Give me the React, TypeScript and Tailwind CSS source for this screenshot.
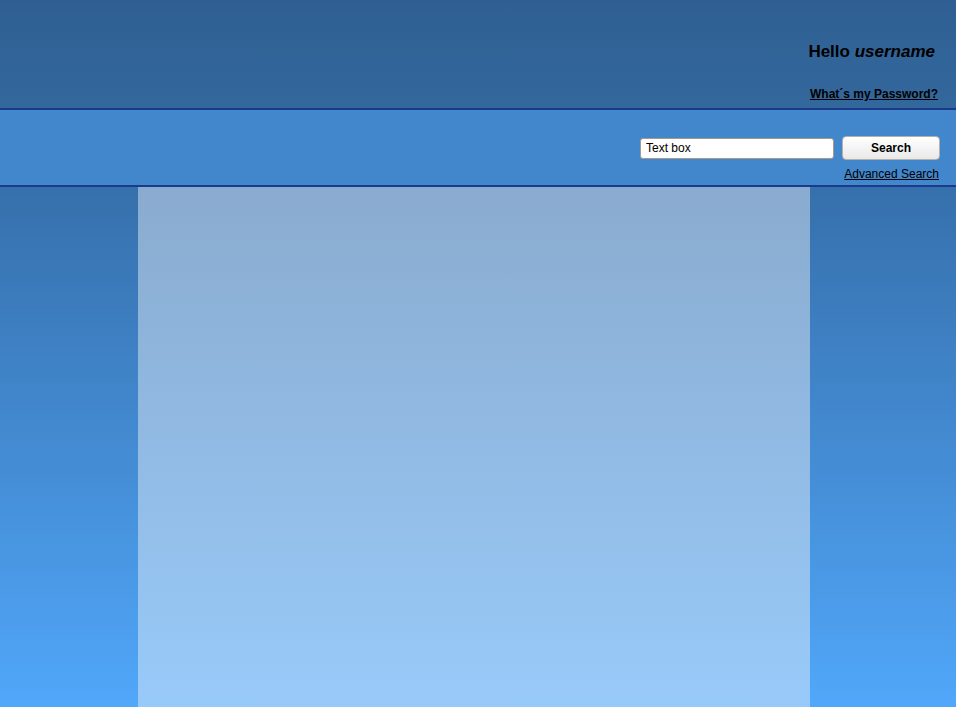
export default function App() {
  return (
    <div className="flex min-h-[707px] flex-col font-['Liberation_Sans',Arial,sans-serif] text-black">
      <header className="flex h-[110px] flex-col items-end border-b-2 border-[#1c3a8a] bg-gradient-to-b from-[#2f5f92] to-[#33689d] pr-[18px]">
        <h1 className="mt-[42px] pr-[3px] text-[17px] font-bold leading-5">
          Hello <em>username</em>
        </h1>
        <a href="#" className="mt-[24px] text-[12px] font-bold leading-4 underline">
          What´s my Password?
        </a>
      </header>

      <div className="flex h-[77px] flex-col items-end border-b-2 border-[#1c3a8a] bg-[#4287cc] pr-[17px]">
        <div className="mr-[-1px] mt-[26px] flex items-center gap-[8px]">
          <input
            type="text"
            defaultValue="Text box"
            className="h-[21px] w-[194px] rounded-[3px] border border-[#a89a88] bg-white px-[5px] text-[12px] outline-none"
          />
          <button className="h-[24px] w-[98px] rounded-[4px] border border-[#b5b0a8] bg-gradient-to-b from-white to-[#e9e9e9] text-[12px] font-bold">
            Search
          </button>
        </div>
        <a href="#" className="mt-[6px] text-[12px] leading-4 underline">
          Advanced Search
        </a>
      </div>

      <main className="flex flex-1 bg-gradient-to-b from-[#3670ac] to-[#51a7fa]">
        <div className="w-[138px]" />
        <div className="w-[672px] bg-gradient-to-b from-[#8aabcf] to-[#98caf9]" />
        <div className="flex-1" />
      </main>
    </div>
  );
}
